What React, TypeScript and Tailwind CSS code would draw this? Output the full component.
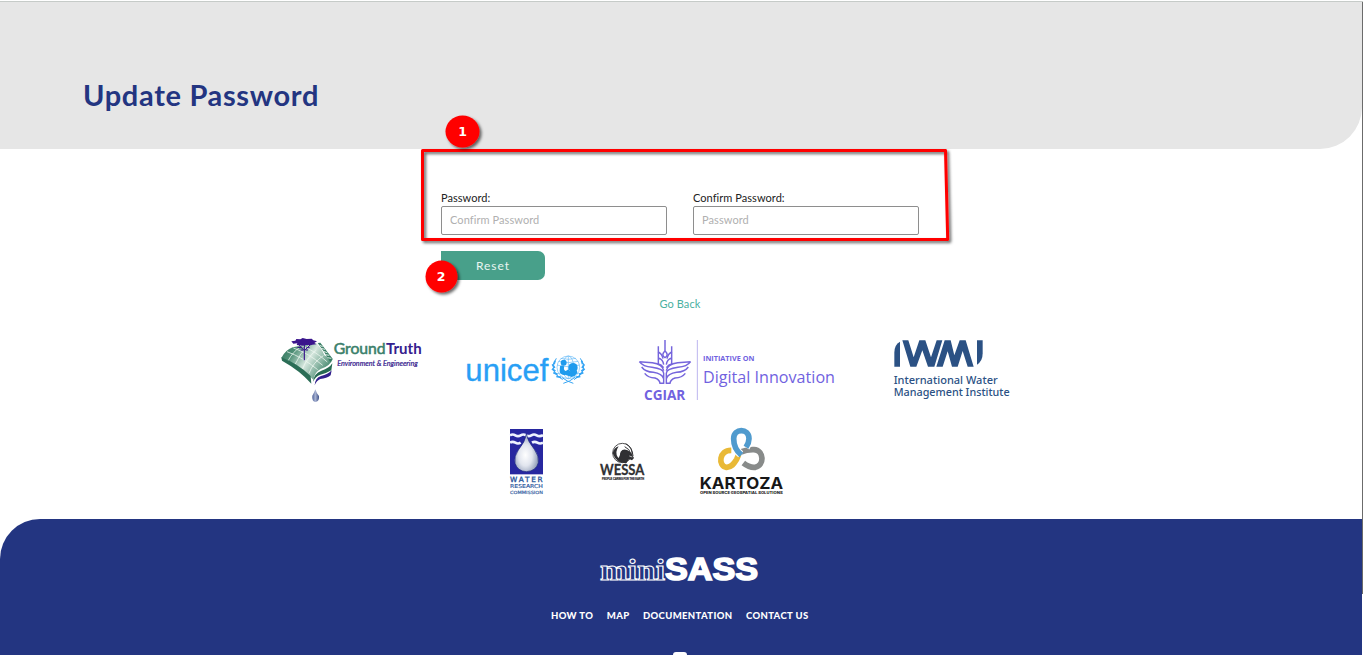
import React from "react";

function GroundTruthLogo() {
  return (
    <svg className="h-[90px] w-[170px] shrink-0" viewBox="0 0 510 270" aria-label="GroundTruth">
      <defs>
        <linearGradient id="sheet" x1="0" y1="0" x2="1" y2="0.5">
          <stop offset="0" stopColor="#2f705a" />
          <stop offset="0.28" stopColor="#4f8f76" />
          <stop offset="0.6" stopColor="#d7e8df" />
          <stop offset="1" stopColor="#4b8c73" />
        </linearGradient>
        <linearGradient id="drop" x1="0" y1="0" x2="1" y2="0">
          <stop offset="0" stopColor="#4c5f98" />
          <stop offset="0.45" stopColor="#a9b4d3" />
          <stop offset="1" stopColor="#3d5088" />
        </linearGradient>
      </defs>
      <path d="M34 99 Q46 75 68 67 L138 54 Q157 72 163 91 L188 103 Q180 124 152 132 Q135 140 130 164 Q95 125 34 99Z" fill="url(#sheet)" />
      <path d="M34 97 Q85 117 122 153 L124 176 Q90 137 36 107Z" fill="#2b6d56" />
      <path d="M51 80 Q98 97 143 134 M70 69 Q115 84 158 121 M95 62 Q137 79 172 111 M55 106 Q67 82 92 65 M76 117 Q88 86 117 60 M98 132 Q107 102 139 75 M117 145 Q129 112 160 92" fill="none" stroke="#eef7f1" strokeWidth="2.3" />
      <path d="M143 54 L151 53 L188 101 L181 112 Q165 82 143 54Z" fill="#377d63" />
      <path d="M149 61 L158 65 M153 70 L165 73 M160 79 L172 83 M166 89 L178 91 M172 98 L184 100" stroke="#dcece4" strokeWidth="3" />
      <path d="M129 170 Q132 145 154 137 Q178 130 187 115 L184 136 Q170 145 151 149 Q137 153 129 170Z" fill="#276b52" />
      <path d="M134 181 Q135 159 153 153 Q174 149 185 136 L182 151 Q170 161 151 162 Q140 166 134 181Z" fill="#32208c" />
      <path d="M64 49 L76 47 L79 42 L91 43 L98 39 L110 42 L125 41 L130 46 L141 49 L133 54 L139 58 L127 59 L122 61 L109 60 L97 62 L80 60 L82 55 L70 56Z" fill="#3a158c" />
      <path d="M84 57 L103 77 L124 56 M82 67 L95 68 M92 75 L100 75 M109 68 L119 68 M107 75 L114 75" fill="none" stroke="#3a158c" strokeWidth="3" />
      <path d="M103 60 V106" stroke="#3a158c" strokeWidth="3.5" />
      <path d="M136 193 Q133 203 127 212 Q125 229 137 231 Q149 228 147 213 Q139 204 136 193Z" fill="url(#drop)" />
      <text x="191" y="86" fontFamily="Lato, sans-serif" fontSize="46" fontWeight="400" fill="#3b806b" stroke="#3b806b" strokeWidth="1.6" textLength="156" lengthAdjust="spacingAndGlyphs">Ground</text>
      <text x="348" y="86" fontFamily="Lato, sans-serif" fontSize="46" fontWeight="700" fill="#35208d" textLength="107" lengthAdjust="spacingAndGlyphs">Truth</text>
      <text x="202" y="123" fontFamily="Lato, sans-serif" fontSize="24" fontStyle="italic" fontWeight="400" fill="#35208d" stroke="#35208d" strokeWidth="0.7" textLength="241" lengthAdjust="spacingAndGlyphs">Environment &amp; Engineering</text>
    </svg>
  );
}

function UnicefLogo() {
  return (
    <svg className="ml-[15px] mt-[15px] h-[60px] w-[140px] shrink-0" viewBox="0 0 420 180" aria-label="unicef">
      <text x="31" y="122" fontFamily="'Liberation Sans', sans-serif" fontSize="96" fill="#289ff5" stroke="#289ff5" strokeWidth="1" textLength="249" lengthAdjust="spacingAndGlyphs">unicef</text>
      <g fill="none" stroke="#5ab5f6" strokeWidth="1.8">
        <circle cx="340" cy="82" r="34" />
        <ellipse cx="340" cy="82" rx="16" ry="34" />
        <path d="M306 75 Q340 85 374 75 M310 64 Q340 72 370 64 M317 55 Q340 61 363 55 M340 49 V116 M309 101 Q340 90 371 101" />
      </g>
      <g fill="none" stroke="#36a5f4">
        <path d="M304 55 Q277 92 323 119 M376 55 Q404 92 357 119" strokeWidth="3" />
        <path d="M325 130 Q344 125 360 112 M355 130 Q337 125 320 112" strokeWidth="3" />
        <path d="M300 62 L297 73 M292 73 L299 84 M291 86 L301 94 M295 98 L308 103 M304 109 L318 112 M380 62 L383 73 M388 73 L381 84 M389 86 L379 94 M385 98 L372 103 M376 109 L362 112" strokeWidth="5.5" />
      </g>
      <circle cx="326" cy="68" r="9" fill="#1f9bed" />
      <circle cx="354" cy="83" r="14" fill="#1f9bed" />
      <path d="M315 79 Q321 74 328 80 Q324 88 332 93 L341 88 L344 96 L330 106 Q313 103 314 92Z M343 92 L356 96 L366 91 L367 99 Q361 109 350 111 L332 105Z" fill="#1f9bed" />
    </svg>
  );
}

function CgiarLogo() {
  return (
    <svg className="ml-[35px] mt-[5px] h-[80px] w-[220px] shrink-0" viewBox="0 0 660 240" aria-label="CGIAR Initiative on Digital Innovation">
      <g fill="none" stroke="#7565dc" strokeWidth="4.4" strokeLinejoin="round">
        <path d="M105 30 V62 M105 62 Q92 76 105 83 Q118 76 105 62 M85 49 V67 M125 49 V67" />
        <path d="M85 66 Q96 71 99 86 M85 66 V102 Q94 104 101 113 M85 84 Q99 88 101 104 M125 66 Q114 71 111 86 M125 66 V102 Q116 104 109 113 M125 84 Q111 88 109 104" />
        <path d="M28 95 Q39 110 66 112 Q101 117 101 130 V160 M28 95 Q47 96 67 98 Q98 102 101 122 M35 111 Q46 126 70 127 Q96 131 101 146 M44 130 Q54 143 75 144 Q89 149 90 160 H103" />
        <path d="M182 95 Q171 110 144 112 Q109 117 109 130 V160 M182 95 Q163 96 143 98 Q112 102 109 122 M175 111 Q164 126 140 127 Q114 131 109 146 M166 130 Q156 143 135 144 Q121 149 120 160 H107" />
      </g>
      <path d="M202 30 V210" stroke="#bcb5ef" strokeWidth="3" />
      <text x="42" y="209" fontFamily="'Open Sans', sans-serif" fontSize="40" fontWeight="700" fill="#7162df" textLength="124" lengthAdjust="spacingAndGlyphs">CGIAR</text>
      <text x="219" y="93" fontFamily="'Open Sans', sans-serif" fontSize="20" fontWeight="700" fill="#7162df" textLength="154" lengthAdjust="spacingAndGlyphs">INITIATIVE ON</text>
      <text x="219" y="159" fontFamily="'Open Sans', sans-serif" fontSize="50" fill="#7162df" textLength="396" lengthAdjust="spacingAndGlyphs">Digital Innovation</text>
    </svg>
  );
}

function IwmiLogo() {
  return (
    <svg className="ml-[30px] mt-[5px] h-[80px] w-[140px] shrink-0" viewBox="0 0 420 240" aria-label="International Water Management Institute">
      <g fill="#2b5184">
        <path d="M43 110 V68 Q43 44 60 35 V110Z" />
        <path d="M67 31 H85 L101 82 L118 31 H136 L153 82 L170 31 H187 L163 110 H144 L127 61 L109 110 H91Z" />
        <path d="M169 110 L194 31 H212 L223 76 L239 31 H257 L281 110 H263 L248 63 L233 110 H216 L203 64 L188 110Z" />
        <path d="M291 31 H308 V70 Q308 94 291 104Z" />
      </g>
      <text x="41" y="162" fontFamily="'Noto Sans', sans-serif" fontSize="34" fontWeight="500" fill="#2b5184" textLength="312" lengthAdjust="spacingAndGlyphs">International Water</text>
      <text x="41" y="199" fontFamily="'Noto Sans', sans-serif" fontSize="34" fontWeight="500" fill="#2b5184" textLength="348" lengthAdjust="spacingAndGlyphs">Management Institute</text>
    </svg>
  );
}

function WaterResearchLogo() {
  return (
    <svg className="h-[85px] w-[60px] shrink-0" viewBox="0 0 180 255" aria-label="Water Research Commission">
      <defs>
        <radialGradient id="pearl" cx="0.45" cy="0.56" r="0.6">
          <stop offset="0" stopColor="#fff" />
          <stop offset="0.48" stopColor="#e1e5ee" />
          <stop offset="1" stopColor="#8290ae" />
        </radialGradient>
      </defs>
      <rect x="30" y="27" width="99" height="136" fill="#2727a0" />
      <path d="M30 46 Q38 41 46 46 T62 46 T78 46 T94 46 T110 46 T129 46 M30 68 Q38 63 46 68 T62 68 M96 68 Q104 63 112 68 T129 68" fill="none" stroke="#eef3ff" strokeWidth="8" />
      <path d="M79 42 Q76 65 55 90 Q41 109 45 130 Q53 154 79 155 Q109 153 115 128 Q118 108 103 88 Q83 64 79 42Z" fill="url(#pearl)" stroke="#1d277e" strokeWidth="2" />
      <g fill="#2a579c" fontFamily="'DejaVu Sans', sans-serif">
        <text x="30" y="186" fontSize="22" stroke="#2a579c" strokeWidth="1" textLength="98">WATER</text>
        <text x="30" y="205" fontSize="16" stroke="#2a579c" strokeWidth=".4" textLength="99" lengthAdjust="spacingAndGlyphs">RESEARCH</text>
        <text x="30" y="221" fontSize="13" stroke="#2a579c" strokeWidth=".4" textLength="99" lengthAdjust="spacingAndGlyphs">COMMISSION</text>
      </g>
    </svg>
  );
}

function WessaLogo() {
  return (
    <svg className="ml-[30px] h-[85px] w-[60px] shrink-0" viewBox="270 0 180 255" aria-label="WESSA">
      <circle cx="367" cy="99" r="29" fill="none" stroke="#303033" strokeWidth="2.5" />
      <path d="M338 100 Q341 84 356 79 Q344 97 353 111 Q359 119 368 120 Q356 108 362 95 Q370 84 382 91 L393 98 L402 114 L396 121 L387 117 L379 130 Q348 129 338 100Z" fill="#303033" />
      <path d="M362 100 Q370 84 386 94 L394 106 L386 117 L377 130 L352 124Z" fill="#303033" />
      <path d="M377 71 Q397 81 399 108 M374 80 Q389 86 393 103" fill="none" stroke="#303033" strokeWidth="3" />
      <path d="M388 108 L397 111" fill="none" stroke="#fff" strokeWidth="2" />
      <text x="300" y="166" fontFamily="Lato, sans-serif" fontWeight="700" fontSize="43" fill="#303033" stroke="#303033" strokeWidth="0.8" textLength="133" lengthAdjust="spacingAndGlyphs">WESSA</text>
      <text x="306" y="180" fontFamily="'Liberation Sans', sans-serif" fontWeight="700" fontSize="8.5" fill="#303033" stroke="#303033" strokeWidth="0.6" textLength="126" lengthAdjust="spacingAndGlyphs">PEOPLE CARING FOR THE EARTH</text>
    </svg>
  );
}

function KartozaLogo() {
  return (
    <svg className="ml-[40px] h-[85px] w-[110px] shrink-0" viewBox="0 0 330 255" aria-label="Kartoza">
      <g fill="none" strokeWidth="17">
        <path d="M152 96 Q172 88 192 89 C222 91 224 136 196 142 Q179 144 160 129" stroke="#888b8a" />
        <path d="M124 91 C86 90 84 139 109 142 C126 143 133 129 140 118 Q146 107 146 93" stroke="#fff" strokeWidth="23" />
        <path d="M124 91 C86 90 84 139 109 142 C126 143 133 129 140 118 Q145 108 147 98" stroke="#e9b936" />
        <path d="M152 103 Q131 86 131 56 C131 24 177 24 177 56 Q177 68 168 82" stroke="#fff" strokeWidth="23" />
        <path d="M154 105 Q131 86 131 56 C131 24 177 24 177 56 Q177 68 168 82" stroke="#509bce" />
      </g>
      <text x="29" y="207" fontFamily="Inter, sans-serif" fontWeight="700" fontSize="48" fill="#171717" textLength="250" lengthAdjust="spacingAndGlyphs">KARTOZA</text>
      <text x="30" y="223" fontFamily="Inter, sans-serif" fontWeight="800" fontSize="11" fill="#222" textLength="248" lengthAdjust="spacingAndGlyphs">OPEN SOURCE GEOSPATIAL SOLUTIONS</text>
    </svg>
  );
}

function PasswordField({ label, placeholder }: { label: string; placeholder: string }) {
  return (
    <label className="flex w-[226px] flex-col text-[11px] leading-4 tracking-[0.05px] text-[#222]">
      <span>{label}</span>
      <input
        type="password"
        placeholder={placeholder}
        className="h-[29px] w-full rounded-[2px] border border-[#8e8e8e] bg-white px-2 pb-[2px] text-[11px] tracking-[0.08px] outline-none placeholder:text-[#b0b0b0]"
      />
    </label>
  );
}

function Annotations() {
  return (
    <svg className="pointer-events-none absolute left-[415px] top-[105px]" width="550" height="200" viewBox="415 105 550 200" aria-hidden="true">
      <defs>
        <filter id="shadow" x="-20%" y="-20%" width="150%" height="150%">
          <feDropShadow dx="2" dy="2" stdDeviation="1.6" floodColor="#000" floodOpacity="0.6" />
        </filter>
      </defs>
      <path d="M422.5 150.5 H945.5 L947.7 239.5 H422.5Z" fill="none" stroke="#f00" strokeWidth="3" strokeLinejoin="round" filter="url(#shadow)" />
      <ellipse cx="462.5" cy="131.5" rx="17" ry="16" fill="#f00" filter="url(#shadow)" />
      <circle cx="441.5" cy="276.5" r="16" fill="#f00" filter="url(#shadow)" />
      <g fill="#fff" fontFamily="'DejaVu Sans', sans-serif" fontSize="12.5" fontWeight="700" textAnchor="middle">
        <text x="462.5" y="136">1</text>
        <text x="441" y="281">2</text>
      </g>
    </svg>
  );
}

export default function App() {
  return (
    <div className="relative flex h-[655px] w-[1363px] flex-col overflow-hidden bg-white font-['Lato',sans-serif]">
      <div className="mt-px h-px shrink-0 bg-[#c6cbc8]" />
      <header className="flex h-[147px] w-[1362px] shrink-0 items-start rounded-br-[42px] bg-[#e6e6e6] pl-[83px] pt-[73px]">
        <h1 className="text-[29px] font-bold leading-10 tracking-[0.67px] text-[#233581]">Update Password</h1>
      </header>

      <form className="ml-[441px] mt-[41px] flex h-[90px] w-[478px] shrink-0 flex-col items-start">
        <div className="flex w-full justify-between">
          <PasswordField label="Password:" placeholder="Confirm Password" />
          <PasswordField label="Confirm Password:" placeholder="Password" />
        </div>
        <button type="button" className="mt-4 h-[29px] w-[104px] rounded-[7px] rounded-tl-none bg-[#48a08a] text-[12px] tracking-[0.95px] text-[#e9f5f1]">
          Reset
        </button>
      </form>
      <a className="ml-[659.5px] mt-[16px] w-[42px] shrink-0 whitespace-nowrap text-[11px] leading-4 tracking-[0.08px] text-[#4ab0a1]" href="#">Go Back</a>

      <section className="ml-[270px] mt-[13px] flex h-[95px] shrink-0 items-start">
        <GroundTruthLogo />
        <UnicefLogo />
        <CgiarLogo />
        <IwmiLogo />
      </section>
      <section className="ml-[500px] flex h-[99px] shrink-0 items-start">
        <WaterResearchLogo />
        <WessaLogo />
        <KartozaLogo />
      </section>

      <footer className="flex w-[1362px] grow flex-col rounded-tl-[40px] bg-[#233581]">
        <svg className="ml-[595px] mt-[31px] h-[40px] w-[170px] shrink-0" viewBox="0 0 170 40" aria-label="miniSASS">
          <text x="5" y="30" fontFamily="'Liberation Serif', serif" fontSize="30" fontWeight="700" fill="#233581" stroke="#fff" strokeWidth="1.1" textLength="65" lengthAdjust="spacingAndGlyphs">mini</text>
          <text x="70" y="30" fontFamily="'Liberation Sans', sans-serif" fontSize="32" fontWeight="700" fill="#fff" stroke="#fff" strokeWidth="1.7" textLength="93" lengthAdjust="spacingAndGlyphs">SASS</text>
        </svg>
        <nav className="ml-[551px] mt-[18px] flex h-4 w-[257.5px] justify-between whitespace-nowrap text-[9.5px] font-black leading-4 tracking-[0.36px] text-white">
          <a href="#">HOW TO</a>
          <a href="#">MAP</a>
          <a href="#">DOCUMENTATION</a>
          <a href="#">CONTACT US</a>
        </nav>
        <div className="ml-[673px] mt-[28px] h-[14px] w-[14px] shrink-0 rounded-[3px] bg-white" />
      </footer>

      <Annotations />
      <div className="absolute right-0 top-[2px] h-[592px] w-px bg-[#6b6b6b]" />
    </div>
  );
}
